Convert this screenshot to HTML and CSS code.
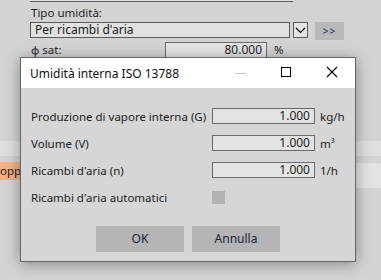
FILE: index.html
```html
<!DOCTYPE html>
<html lang="it">
<head>
<meta charset="utf-8">
<link rel="stylesheet" href="styles.css">
</head>
<body>
<div class="form">
  <div class="prev-field"></div>
  <div class="label">Tipo umidità:</div>
  <div class="select-row">
    <div class="select">Per ricambi d'aria</div>
    <div class="select-arrow">
      <svg width="13" height="13" viewBox="0 0 13 13"><path d="M2 4 L6.5 8.5 L11 4" fill="none" stroke="#000" stroke-width="1.2"/></svg>
    </div>
    <div class="more-btn"><span class="chev">&gt;&gt;</span></div>
  </div>
  <div class="phi-row">
    <div class="phi-label">φ sat:</div>
    <div class="field phi-field">80.000</div>
    <div class="unit">%</div>
  </div>
  <div class="table">
    <div class="trow light"></div>
    <div class="trow second">
      <div class="orange-cell">oppiamento</div>
      <div class="cell-rest"></div>
    </div>
  </div>
</div>

<div class="dialog">
  <div class="titlebar">
    <div class="title">Umidità interna ISO 13788</div>
    <div class="controls">
      <svg class="ctl" width="46" height="30" viewBox="0 0 46 30"><path d="M18 15.5 H29" stroke="#c9c9c9" stroke-width="1"/></svg>
      <svg class="ctl" width="46" height="30" viewBox="0 0 46 30"><rect x="18.5" y="9.5" width="9" height="9" fill="none" stroke="#000" stroke-width="1"/></svg>
      <svg class="ctl" width="46" height="30" viewBox="0 0 46 30"><path d="M18 9 L28 19 M28 9 L18 19" stroke="#000" stroke-width="1.1"/></svg>
    </div>
  </div>
  <div class="body">
    <div class="drow">
      <div class="dlabel">Produzione di vapore interna (G)</div>
      <div class="field dfield">1.000</div>
      <div class="dunit">kg/h</div>
    </div>
    <div class="drow">
      <div class="dlabel">Volume (V)</div>
      <div class="field dfield">1.000</div>
      <div class="dunit">m<sup>3</sup></div>
    </div>
    <div class="drow">
      <div class="dlabel">Ricambi d'aria (n)</div>
      <div class="field dfield">1.000</div>
      <div class="dunit">1/h</div>
    </div>
    <div class="drow">
      <div class="dlabel">Ricambi d'aria automatici</div>
      <div class="checkbox"></div>
    </div>
    <div class="buttons">
      <div class="btn">OK</div>
      <div class="btn">Annulla</div>
    </div>
  </div>
</div>
</body>
</html>
```
FILE: styles.css
```css
html, body {
  margin: 0;
  padding: 0;
}
body {
  width: 381px;
  height: 280px;
  overflow: hidden;
  background: #d3d3d3;
  font-family: "Noto Sans", sans-serif;
  font-size: 11.5px;
  color: #1c1c1c;
  position: relative;
}
.form {
  display: flex;
  flex-direction: column;
}
.prev-field {
  margin-left: 30px;
  width: 263px;
  height: 1px;
  border-bottom: 1px solid #5c5c5c;
  background: #e0e0e0;
}
.label {
  margin-left: 31px;
  height: 18px;
  line-height: 18px;
  margin-top: 2px;
}
.select-row {
  display: flex;
  align-items: flex-start;
  margin-left: 30px;
}
.select {
  width: 254px;
  height: 14px;
  line-height: 14px;
  border: 1px solid #5a5a5a;
  background: #e1e1e1;
  padding-left: 4px;
  font-size: 12px;
}
.select-arrow {
  margin-left: 3px;
  width: 13px;
  height: 14px;
  border: 1px solid #5a5a5a;
  background: #e4e4e4;
  display: flex;
  align-items: center;
  justify-content: center;
}
.more-btn {
  margin-left: 7px;
  width: 29px;
  height: 18px;
  background: #b9b9b9;
  display: flex;
  align-items: center;
  justify-content: center;
  font-size: 10px;
  letter-spacing: 1px;
  color: #1a2a5a;
}
.phi-row {
  display: flex;
  align-items: center;
  height: 17px;
  margin-top: 1px;
}
.phi-label {
  margin-left: 31px;
  width: 134px;
}
.field {
  height: 14px;
  line-height: 14px;
  border: 1px solid #6a6a6a;
  background: #e4e4e4;
  text-align: right;
  padding-right: 4px;
  box-sizing: content-box;
  font-size: 12px;
}
.phi-field {
  width: 96px;
}
.unit {
  margin-left: 7px;
}
.table {
  margin-top: 83px;
  display: flex;
  flex-direction: column;
}
.trow.light {
  height: 15px;
  background: #dfdfdf;
}
.trow.second {
  margin-top: 6px;
  height: 18px;
  display: flex;
}
.orange-cell {
  width: 60px;
  background: #f4b183;
  line-height: 18px;
  overflow: hidden;
  white-space: nowrap;
}
.cell-rest {
  flex: 1;
  background: #e3e3e3;
  margin-top: 1px;
  height: 25px;
}

.dialog {
  position: absolute;
  left: 20px;
  top: 57px;
  width: 334px;
  height: 203px;
  border: 1px solid #666;
  background: #d6d6d6;
  box-shadow: 0 2px 14px rgba(0,0,0,0.35);
  display: flex;
  flex-direction: column;
}
.titlebar {
  height: 30px;
  background: #ffffff;
  display: flex;
  align-items: center;
  justify-content: space-between;
}
.title {
  padding-left: 9px;
  font-size: 12px;
  color: #111;
}
.controls {
  display: flex;
}
.ctl {
  display: block;
}
.body {
  display: flex;
  flex-direction: column;
  padding: 20px 0 0 10px;
  gap: 11px;
}
.drow {
  display: grid;
  grid-template-columns: 181px 103px auto;
  align-items: center;
  height: 16px;
}
.dfield {
  width: 97px;
}
.dunit {
  padding-left: 5px;
}
.dunit sup {
  font-size: 7px;
  vertical-align: 5px;
}
.checkbox {
  width: 13px;
  height: 13px;
  background: #b2b2b2;
}
.buttons {
  margin-top: 10px;
  display: flex;
  justify-content: center;
  gap: 8px;
  padding-right: 10px;
}
.btn {
  width: 88px;
  height: 26px;
  line-height: 26px;
  text-align: center;
  background: #b5b5b5;
  color: #1a1f3a;
  font-size: 12px;
}
```
